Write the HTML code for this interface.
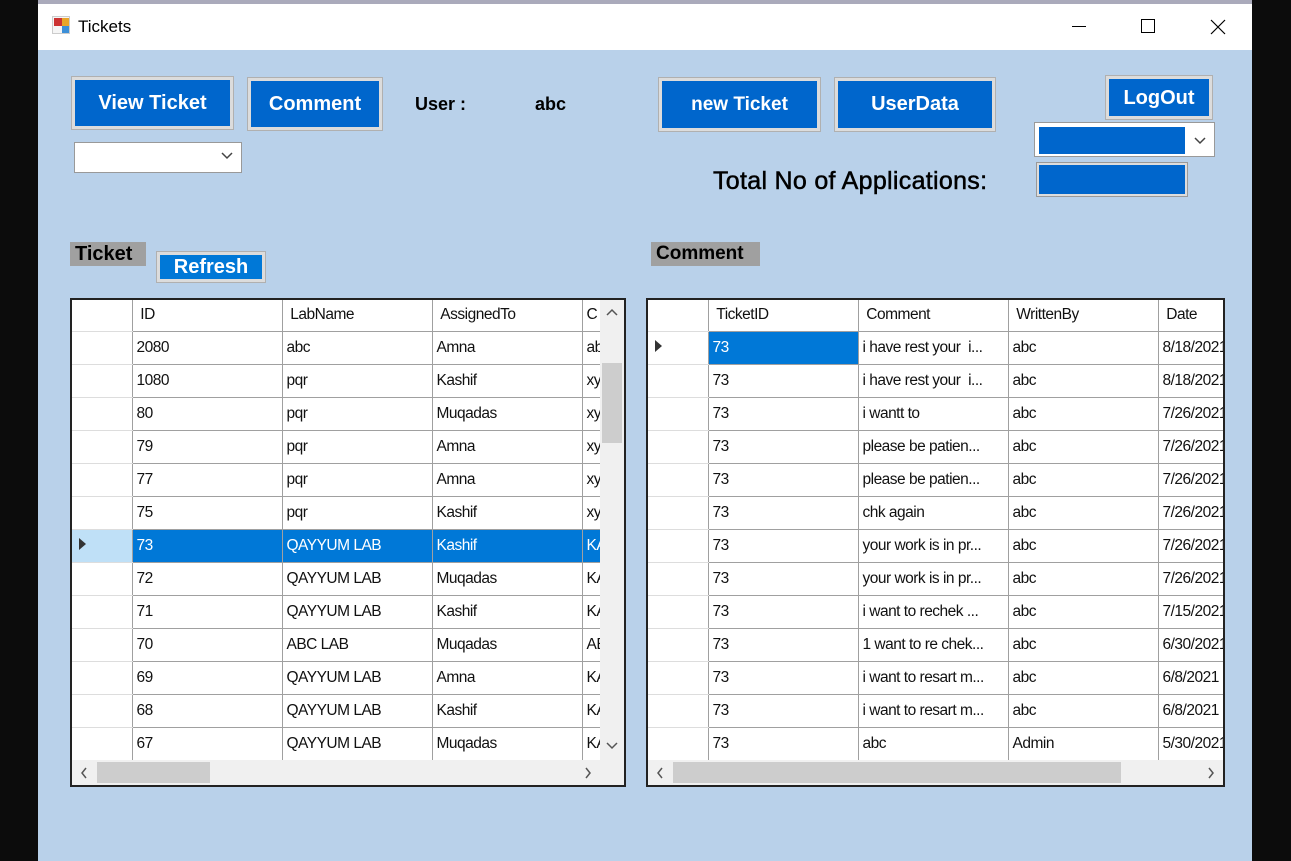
<!DOCTYPE html>
<html><head><meta charset="utf-8"><style>
*{margin:0;padding:0;box-sizing:border-box}
body{width:1291px;height:861px;background:#0c0c0c;position:relative;overflow:hidden;font-family:"Liberation Sans",Arial,sans-serif}
.a{position:absolute}
.win{left:38px;top:4px;width:1214px;height:857px;background:#b9d1ea}
.tb{left:38px;top:4px;width:1214px;height:46px;background:#fff}
.btn{position:absolute;background:#0066cc;color:#fff;font-weight:bold;font-size:19px;text-align:center;border:3px solid #dcdcdc;outline:1px solid #b0b0b0;display:flex;align-items:center;justify-content:center}
.lbl{position:absolute;font-weight:bold;color:#000}
.grid{position:absolute;border:2px solid #222;background:#fff;overflow:hidden}
table{border-collapse:collapse;table-layout:fixed;position:absolute;left:0;top:0}
td{height:33px;border:1px solid #a0a0a0;font-size:15.5px;padding-left:4px;white-space:nowrap;overflow:hidden;color:#111;letter-spacing:-0.5px}
tr.h td{height:31px;border-top:none}
td.rh{border-left:none;border-right:1px solid #a0a0a0;border-top:1px solid #ddd;border-bottom:1px solid #ddd}
tr.s td{background:#0078d7;color:#fff}
tr.s td.rh{background:#bfe0f7}
.sel{background:#0078d7!important;color:#fff!important}
.arr{display:inline-block;width:0;height:0;border-top:6px solid transparent;border-bottom:6px solid transparent;border-left:7px solid #333;margin-left:3px}
.hs{position:absolute;height:25px;background:#f0f0f0}
.th{position:absolute;background:#cdcdcd}
</style></head><body>
<div class="a" style="left:38px;top:0;width:1214px;height:4px;background:#aab"></div>
<div class="a win"></div>
<div class="a tb"></div>
<div class="a" style="left:52px;top:16px;width:18px;height:18px;border:1px solid #ccc;background:#f5f5f5">
<div class="a" style="left:1px;top:1px;width:8px;height:8px;background:#c33"></div>
<div class="a" style="left:9px;top:1px;width:7px;height:8px;background:#e9a529"></div>
<div class="a" style="left:9px;top:9px;width:7px;height:7px;background:#3c8fd8"></div></div>
<div class="a" style="left:78px;top:17px;font-size:17px;color:#000">Tickets</div>
<div class="a" style="left:1072px;top:26px;width:14px;height:1px;background:#000"></div>
<div class="a" style="left:1141px;top:19px;width:14px;height:14px;border:1px solid #000"></div>
<svg class="a" style="left:1210px;top:19px" width="16" height="16"><path d="M1 1L15 15M15 1L1 15" stroke="#000" stroke-width="1.2"/></svg>

<div class="btn" style="left:72px;top:77px;width:161px;height:52px;font-size:20px">View Ticket</div>
<div class="btn" style="left:248px;top:78px;width:134px;height:52px;font-size:20px">Comment</div>
<div class="lbl" style="left:415px;top:94px;font-size:18px">User :</div>
<div class="lbl" style="left:535px;top:94px;font-size:18px">abc</div>
<div class="btn" style="left:659px;top:78px;width:161px;height:53px">new Ticket</div>
<div class="btn" style="left:835px;top:78px;width:160px;height:53px;font-size:20px">UserData</div>
<div class="btn" style="left:1106px;top:76px;width:106px;height:43px;font-size:20px;padding-top:2px">LogOut</div>

<div class="a" style="left:74px;top:142px;width:168px;height:31px;background:#fff;border:1px solid #999"></div>
<svg class="a" style="left:221px;top:152px" width="12" height="8"><path d="M1 1L6 6L11 1" stroke="#444" fill="none" stroke-width="1.5"/></svg>
<div class="a" style="left:1034px;top:122px;width:181px;height:35px;background:#fff;border:1px solid #999"></div>
<div class="a" style="left:1039px;top:127px;width:146px;height:27px;background:#0066cc"></div>
<svg class="a" style="left:1194px;top:137px" width="12" height="8"><path d="M1 1L6 6L11 1" stroke="#444" fill="none" stroke-width="1.5"/></svg>
<div class="lbl" style="left:713px;top:167px;font-size:25px;font-weight:normal;letter-spacing:0.3px;-webkit-text-stroke:0.5px #000">Total No of Applications:</div>
<div class="a" style="left:1037px;top:163px;width:150px;height:33px;background:#0066cc;border:2px solid #ddd;outline:1px solid #999"></div>

<div class="lbl" style="left:70px;top:242px;width:76px;height:24px;background:#a0a0a0;font-size:20px;padding-left:5px;line-height:24px">Ticket</div>
<div class="btn" style="left:157px;top:252px;width:108px;height:30px;font-size:20px;background:#0078d7">Refresh</div>
<div class="lbl" style="left:651px;top:242px;width:109px;height:24px;background:#a0a0a0;font-size:19px;padding-left:5px;line-height:24px">Comment</div>

<div class="grid" style="left:70px;top:298px;width:556px;height:489px">
<table style="width:560px">
<colgroup><col style="width:60px"><col style="width:150px"><col style="width:150px"><col style="width:150px"><col style="width:50px"></colgroup>
<tr class="h"><td class="rh"></td><td>&nbsp;ID</td><td>&nbsp;LabName</td><td>&nbsp;AssignedTo</td><td>C</td></tr>
<tr><td class="rh"></td><td>2080</td><td>abc</td><td>Amna</td><td>ab</td></tr>
<tr><td class="rh"></td><td>1080</td><td>pqr</td><td>Kashif</td><td>xy</td></tr>
<tr><td class="rh"></td><td>80</td><td>pqr</td><td>Muqadas</td><td>xy</td></tr>
<tr><td class="rh"></td><td>79</td><td>pqr</td><td>Amna</td><td>xy</td></tr>
<tr><td class="rh"></td><td>77</td><td>pqr</td><td>Amna</td><td>xy</td></tr>
<tr><td class="rh"></td><td>75</td><td>pqr</td><td>Kashif</td><td>xy</td></tr>
<tr class="s"><td class="rh"><span class="arr"></span></td><td>73</td><td>QAYYUM LAB</td><td>Kashif</td><td>KA</td></tr>
<tr><td class="rh"></td><td>72</td><td>QAYYUM LAB</td><td>Muqadas</td><td>KA</td></tr>
<tr><td class="rh"></td><td>71</td><td>QAYYUM LAB</td><td>Kashif</td><td>KA</td></tr>
<tr><td class="rh"></td><td>70</td><td>ABC LAB</td><td>Muqadas</td><td>AB</td></tr>
<tr><td class="rh"></td><td>69</td><td>QAYYUM LAB</td><td>Amna</td><td>KA</td></tr>
<tr><td class="rh"></td><td>68</td><td>QAYYUM LAB</td><td>Kashif</td><td>KA</td></tr>
<tr><td class="rh"></td><td>67</td><td>QAYYUM LAB</td><td>Muqadas</td><td>KA</td></tr>
</table>
<div class="a" style="left:528px;top:0;width:24px;height:460px;background:#f0f0f0"></div>
<div class="th" style="left:530px;top:63px;width:20px;height:80px"></div>
<svg class="a" style="left:534px;top:8px" width="12" height="8"><path d="M1 7L6 2L11 7" stroke="#555" fill="none" stroke-width="1.5"/></svg>
<svg class="a" style="left:534px;top:442px" width="12" height="8"><path d="M1 1L6 6L11 1" stroke="#555" fill="none" stroke-width="1.5"/></svg>
<div class="hs" style="left:0;top:460px;width:552px"></div>
<div class="th" style="left:25px;top:462px;width:113px;height:21px"></div>
<svg class="a" style="left:8px;top:467px" width="8" height="12"><path d="M6 1L2 6L6 11" stroke="#555" fill="none" stroke-width="1.5"/></svg>
<svg class="a" style="left:512px;top:467px" width="8" height="12"><path d="M2 1L6 6L2 11" stroke="#555" fill="none" stroke-width="1.5"/></svg>
</div>

<div class="grid" style="left:646px;top:298px;width:579px;height:489px">
<table style="width:610px">
<colgroup><col style="width:60px"><col style="width:150px"><col style="width:150px"><col style="width:150px"><col style="width:100px"></colgroup>
<tr class="h"><td class="rh"></td><td>&nbsp;TicketID</td><td>&nbsp;Comment</td><td>&nbsp;WrittenBy</td><td>&nbsp;Date</td></tr>
<tr><td class="rh"><span class="arr"></span></td><td class="sel">73</td><td>i have rest your&nbsp; i...</td><td>abc</td><td>8/18/2021</td></tr>
<tr><td class="rh"></td><td>73</td><td>i have rest your&nbsp; i...</td><td>abc</td><td>8/18/2021</td></tr>
<tr><td class="rh"></td><td>73</td><td>i wantt to</td><td>abc</td><td>7/26/2021</td></tr>
<tr><td class="rh"></td><td>73</td><td>please be patien...</td><td>abc</td><td>7/26/2021</td></tr>
<tr><td class="rh"></td><td>73</td><td>please be patien...</td><td>abc</td><td>7/26/2021</td></tr>
<tr><td class="rh"></td><td>73</td><td>chk again</td><td>abc</td><td>7/26/2021</td></tr>
<tr><td class="rh"></td><td>73</td><td>your work is in pr...</td><td>abc</td><td>7/26/2021</td></tr>
<tr><td class="rh"></td><td>73</td><td>your work is in pr...</td><td>abc</td><td>7/26/2021</td></tr>
<tr><td class="rh"></td><td>73</td><td>i want to rechek ...</td><td>abc</td><td>7/15/2021</td></tr>
<tr><td class="rh"></td><td>73</td><td>1 want to re chek...</td><td>abc</td><td>6/30/2021</td></tr>
<tr><td class="rh"></td><td>73</td><td>i want to resart m...</td><td>abc</td><td>6/8/2021</td></tr>
<tr><td class="rh"></td><td>73</td><td>i want to resart m...</td><td>abc</td><td>6/8/2021</td></tr>
<tr><td class="rh"></td><td>73</td><td>abc</td><td>Admin</td><td>5/30/2021</td></tr>
</table>
<div class="hs" style="left:0;top:460px;width:575px"></div>
<div class="th" style="left:25px;top:462px;width:448px;height:21px"></div>
<svg class="a" style="left:8px;top:467px" width="8" height="12"><path d="M6 1L2 6L6 11" stroke="#555" fill="none" stroke-width="1.5"/></svg>
<svg class="a" style="left:559px;top:467px" width="8" height="12"><path d="M2 1L6 6L2 11" stroke="#555" fill="none" stroke-width="1.5"/></svg>
</div>
</body></html>
